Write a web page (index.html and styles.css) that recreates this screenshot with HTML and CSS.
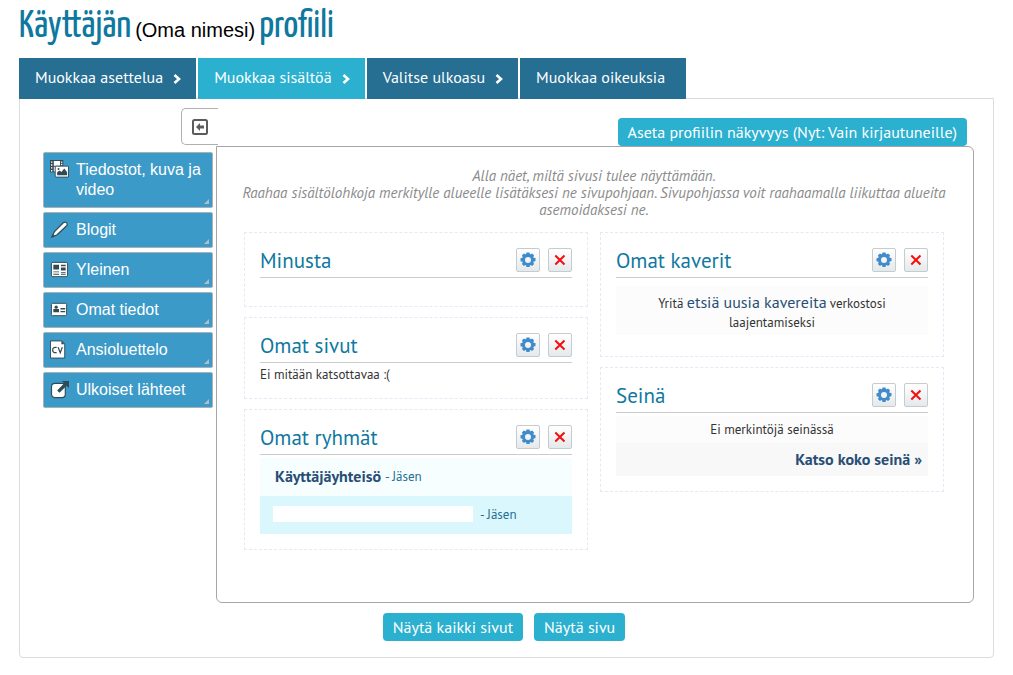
FILE: index.html
```
<!DOCTYPE html>
<html lang="fi">
<head>
<meta charset="utf-8">
<title>Käyttäjän profiili</title>
<link rel="stylesheet" href="styles.css">
</head>
<body>
<svg class="defs" aria-hidden="true">
  <symbol id="chevron" viewBox="0 0 8 10"><path d="M1.5 1 6 5 1.5 9" fill="none" stroke="#fff" stroke-width="2.6"/></symbol>
  <symbol id="gear" viewBox="0 0 16 16"><path fill="#428bca" fill-rule="evenodd" d="M6.500.5h3l.4 1.500.7.3 1.500-.8 2 2-.8 1.500.3.700 1.900.4v3l-1.900.6-.3.700.8 1.500-2 2-1.500-.8-.7.3-.4 1.600h-3l-.4-1.600-.7-.3-1.500.8-2-2 .8-1.500-.3-.7L.5 9.300v-3l1.900-.6.3-.7-.8-1.500 2-2 1.500.8.700-.3zM8 5a3 3 0 1 0 0 6 3 3 0 0 0 0-6z"/></symbol>
  <symbol id="cross" viewBox="0 0 12 12"><path d="M1.300 1.500 10.500 10.500M10.500 1.500 1.300 10.500" fill="none" stroke="#f60d0d" stroke-width="2"/></symbol>
</svg>
<main class="page">
  <h1 class="title">Käyttäjän <span class="title-name">(Oma nimesi)</span> profiili</h1>
  <nav class="tabs">
    <a class="tab" href="#asettelu">Muokkaa asettelua <svg class="chevron"><use href="#chevron"/></svg></a>
    <a class="tab tab-active" href="#sisalto">Muokkaa sisältöä <svg class="chevron"><use href="#chevron"/></svg></a>
    <a class="tab" href="#ulkoasu">Valitse ulkoasu <svg class="chevron"><use href="#chevron"/></svg></a>
    <a class="tab" href="#oikeudet">Muokkaa oikeuksia</a>
  </nav>
  <section class="panel">
    <div class="topbar">
      <button class="collapse" type="button" aria-label="Piilota valikko">
        <svg width="16" height="16" viewBox="0 0 16 16"><rect x="1" y="1" width="14" height="14" rx="1.500" fill="none" stroke="#5c5c5c" stroke-width="2"/><path d="M4 8l4-4v2.500h4v3H8V12z" fill="#5c5c5c"/></svg>
      </button>
      <button class="btn" type="button">Aseta profiilin näkyvyys (Nyt: Vain kirjautuneille)</button>
    </div>
    <div class="workspace">
      <aside class="palette">
        <button class="tool" type="button"><svg class="tool-icon" viewBox="0 0 20 20"><path d="M0 0h14v13H0z" fill="#304a56"/><path d="M4 1h6.500v5H4zM4 7h3v5H4zM1 1.500h1.500V3H1zM1 4.500h1.500V6H1zM1 7.500h1.500V9H1zM1 10.500h1.500V12H1zM11.500 1.500H13V3h-1.500zM11.500 4H13v1.500h-1.500z" fill="#fff"/><rect x="5.500" y="6.500" width="14" height="11.500" rx="1" fill="#304a56" stroke="#304a56"/><path d="M6 7h13v10.500H6z" fill="#fff"/><path d="M7.500 16v-3l2.500-2 2 1.500 3-3.500 3 4v3z" fill="#304a56"/><circle cx="9" cy="9.500" r="1" fill="#304a56"/></svg><span>Tiedostot, kuva ja video</span></button>
        <button class="tool" type="button"><svg class="tool-icon" viewBox="0 0 20 20"><path d="M2 18l2.500-5.500L14.500 2.500q2-1 3.500 1 .500 1.500-.5 2.500L7.500 15.500z" fill="#fff" stroke="#304a56" stroke-width="1.300"/><path d="M2 18l1.500-3 1.500 1.500z" fill="#304a56"/></svg><span>Blogit</span></button>
        <button class="tool" type="button"><svg class="tool-icon" viewBox="0 0 20 20"><rect x="1.500" y="2.500" width="17" height="15" rx="1.500" fill="#fff" stroke="#304a56"/><path d="M3.500 5h6v5h-6zM11.500 5h5v1.500h-5zM11.500 8h5v3h-5zM3.500 12h6v1h-6zM3.500 14.500h6v1h-6zM11.500 12.500h5v1h-5zM11.500 14.500h5v1h-5z" fill="#304a56"/></svg><span>Yleinen</span></button>
        <button class="tool" type="button"><svg class="tool-icon" viewBox="0 0 20 20"><rect x="1.500" y="3.500" width="16" height="13" rx="1" fill="#fff" stroke="#304a56"/><circle cx="6.500" cy="7.500" r="1.700" fill="#304a56"/><path d="M3.500 13V9.500h6V13zM11 8.500h5V10h-5zM11 11.500h5V13h-5z" fill="#304a56"/></svg><span>Omat tiedot</span></button>
        <button class="tool" type="button"><svg class="tool-icon" viewBox="0 0 20 20"><path d="M.5 1h12l3 3v15H.5z" fill="#fff" stroke="#304a56"/><path d="M12 1v3.500h3.500z" fill="#304a56"/><path d="M7 7.800Q2.800 7 2.800 10.500T7 13.200M8.500 7.500l2.300 6L13 7.500" fill="none" stroke="#304a56" stroke-width="1.300"/></svg><span>Ansioluettelo</span></button>
        <button class="tool" type="button"><svg class="tool-icon" viewBox="0 0 20 20"><rect x="1.600" y="3.600" width="14.500" height="15" rx="3.500" fill="#fff" stroke="#304a56" stroke-width="1.200"/><path d="M12.500 1h7.500v7.500l-2.500-2.500-7.500 7.500-2.500-2.500 7.500-7.500z" fill="#304a56"/></svg><span>Ulkoiset lähteet</span></button>
      </aside>
      <div class="canvas">
        <p class="intro">Alla näet, miltä sivusi tulee näyttämään.<br>Raahaa sisältölohkoja merkitylle alueelle lisätäksesi ne sivupohjaan. Sivupohjassa voit raahaamalla liikuttaa alueita asemoidaksesi ne.</p>
        <div class="columns">
          <div class="column">
            <article class="block">
              <header class="block-head"><h2>Minusta</h2><button class="mini" type="button" aria-label="Asetukset"><svg width="16" height="16"><use href="#gear"/></svg></button><button class="mini" type="button" aria-label="Poista"><svg width="12" height="12"><use href="#cross"/></svg></button></header>
              <div class="block-body"></div>
            </article>
            <article class="block">
              <header class="block-head"><h2>Omat sivut</h2><button class="mini" type="button" aria-label="Asetukset"><svg width="16" height="16"><use href="#gear"/></svg></button><button class="mini" type="button" aria-label="Poista"><svg width="12" height="12"><use href="#cross"/></svg></button></header>
              <div class="block-body"><p class="note">Ei mitään katsottavaa :(</p></div>
            </article>
            <article class="block">
              <header class="block-head"><h2>Omat ryhmät</h2><button class="mini" type="button" aria-label="Asetukset"><svg width="16" height="16"><use href="#gear"/></svg></button><button class="mini" type="button" aria-label="Poista"><svg width="12" height="12"><use href="#cross"/></svg></button></header>
              <ul class="groups">
                <li class="group"><a href="#ryhma">Käyttäjäyhteisö</a><span>- Jäsen</span></li>
                <li class="group group-alt"><span class="blank"></span><span>- Jäsen</span></li>
              </ul>
            </article>
          </div>
          <div class="column">
            <article class="block">
              <header class="block-head"><h2>Omat kaverit</h2><button class="mini" type="button" aria-label="Asetukset"><svg width="16" height="16"><use href="#gear"/></svg></button><button class="mini" type="button" aria-label="Poista"><svg width="12" height="12"><use href="#cross"/></svg></button></header>
              <p class="friends">Yritä <a href="#kaverit">etsiä uusia kavereita</a> verkostosi laajentamiseksi</p>
            </article>
            <article class="block">
              <header class="block-head"><h2>Seinä</h2><button class="mini" type="button" aria-label="Asetukset"><svg width="16" height="16"><use href="#gear"/></svg></button><button class="mini" type="button" aria-label="Poista"><svg width="12" height="12"><use href="#cross"/></svg></button></header>
              <p class="wall-empty">Ei merkintöjä seinässä</p>
              <p class="wall-more"><a href="#seina">Katso koko seinä »</a></p>
            </article>
          </div>
        </div>
      </div>
    </div>
    <div class="actions">
      <button class="btn" type="button">Näytä kaikki sivut</button>
      <button class="btn" type="button">Näytä sivu</button>
    </div>
  </section>
</main>
</body>
</html>
```
FILE: styles.css
```
* { box-sizing: border-box; }
body { margin: 0; background: #fff; color: #333; font: 13px/19px "PT Sans", "Noto Sans", sans-serif; }
h1, h2, p, ul { margin: 0; padding: 0; }
a { color: inherit; text-decoration: none; }
button { font: inherit; margin: 0; cursor: pointer; }
.defs { display: none; }
.page { padding: 0 19px 16px; }
.title { display: flex; align-items: baseline; gap: 4px; height: 58px; padding-top: 5px; color: #0e789f; font: 400 39px/44px "Yanone Kaffeesatz", "Open Sans Condensed", "Roboto Condensed", "Liberation Sans Narrow", sans-serif; white-space: nowrap; }
.title-name { color: #000; font: 20px/24px "Liberation Sans", sans-serif; }
.tabs { display: flex; gap: 2px; }
.tab { display: flex; align-items: center; gap: 10px; height: 41px; padding: 0 21px 2px 16px; background: #266e92; color: #fff; font-size: 16px; white-space: nowrap; }
.tab:not(:last-child) { padding-right: 15px; }
.tab-active { background: #2bb0d0; }
.chevron { width: 8px; height: 10px; margin-top: 2px; }
.panel { margin-top: -1px; padding: 9px 19px 16px 23px; border: 1px solid #dcdcdc; border-radius: 0 0 4px 4px; }
.topbar { display: flex; justify-content: space-between; align-items: flex-start; padding: 0 7px 0 138px; }
.topbar .btn { margin-top: 10px; }
.collapse { display: grid; place-items: center; width: 37px; height: 37px; padding: 0; border: 1px solid #b0b0b0; border-right: 0; border-radius: 5px 0 0 5px; background: #fff; }
.btn { height: 28px; padding: 0 10px; border: 0; border-radius: 4px; background: #2bb0d0; color: #fff; font-size: 16px; line-height: 28px; }
.workspace { display: flex; gap: 3px; }
.palette { display: flex; flex-direction: column; gap: 4px; flex: 0 0 170px; padding-top: 6px; }
.tool { position: relative; display: flex; align-items: flex-start; gap: 7px; min-height: 36px; padding: 7px 6px; border: 1px solid #aab0b3; border-radius: 2px; background: #3c9ac8; color: #fff; font: 16px/20px "Liberation Sans", sans-serif; text-align: left; }
.tool::after { content: ""; position: absolute; right: 3px; bottom: 3px; border-left: 5px solid transparent; border-bottom: 5px solid #b4bcc0; }
.tool-icon { flex: 0 0 19px; height: 19px; }
.canvas { flex: 1; min-width: 0; padding: 20px 29px 52px 27px; border: 1px solid #a6a6a6; border-radius: 0 6px 6px 6px; }
.intro { margin: 0 -10px 14px; color: #8b8b8b; font-size: 15px; line-height: 17px; font-style: italic; text-align: center; }
.columns { display: grid; grid-template-columns: 1fr 1fr; gap: 12px; align-items: start; }
.column { display: grid; gap: 10px; min-width: 0; }
.block { padding: 15px; border: 1px dashed #e4e9f5; }
.block-head { display: flex; gap: 8px; height: 30px; border-bottom: 1px solid #ccc; }
.block-head h2 { flex: 1; color: #0e789f; font-size: 21px; line-height: 26px; font-weight: 400; }
.mini { display: grid; place-items: center; width: 24px; height: 24px; padding: 0; border: 1px solid #c4cccf; border-radius: 2px; background: linear-gradient(#fff, #e4e9eb); }
.block-body { padding-top: 2px; min-height: 13px; }
.note { line-height: 19px; }
.block-body:has(.note) { height: 20px; }
.groups { padding-top: 3px; list-style: none; color: #266e92; }
.group { display: flex; align-items: center; gap: 4px; height: 38px; padding: 0 15px 2px; background: #f7feff; }
.group a { color: #284e75; font-size: 16px; font-weight: 700; }
.group-alt { gap: 7px; padding-left: 13px; background: #dbf7fe; }
.blank { width: 200px; height: 16px; background: #fff; }
.friends { margin: 8px 0 6px; padding: 7px 32px 3px; background: #fcfcfc; text-align: center; }
.friends a { color: #284e75; font-size: 16px; }
.wall-empty { margin-top: 3px; padding: 4px 0; background: #fcfcfc; text-align: center; }
.wall-more { padding: 7px 6px; background: #f8f8f8; color: #284e75; font-size: 16px; font-weight: 700; text-align: right; }
.actions { display: flex; justify-content: center; gap: 11px; padding: 10px 9px 0 0; }
```
